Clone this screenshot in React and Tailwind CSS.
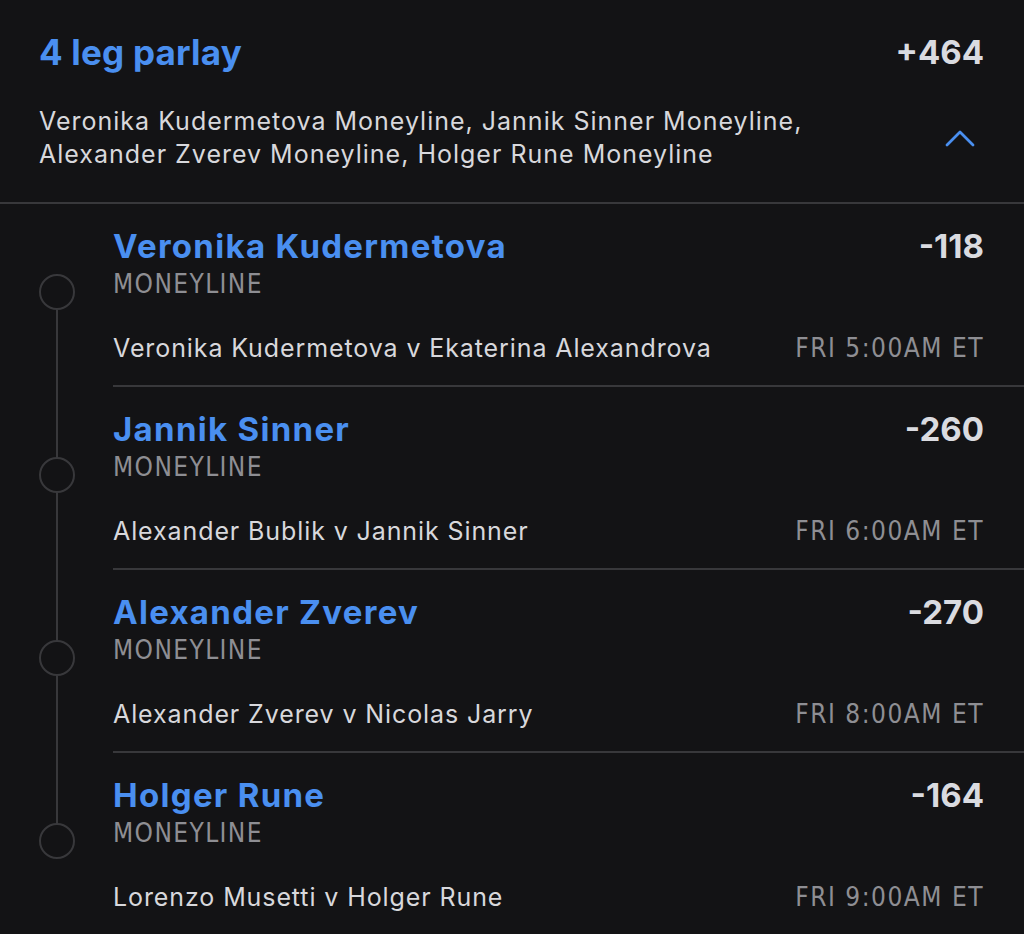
import React from "react";

const legs = [
  {
    name: "Veronika Kudermetova",
    odds: "-118",
    match: "Veronika Kudermetova v Ekaterina Alexandrova",
    time: "FRI 5:00AM ET",
  },
  {
    name: "Jannik Sinner",
    odds: "-260",
    match: "Alexander Bublik v Jannik Sinner",
    time: "FRI 6:00AM ET",
  },
  {
    name: "Alexander Zverev",
    odds: "-270",
    match: "Alexander Zverev v Nicolas Jarry",
    time: "FRI 8:00AM ET",
  },
  {
    name: "Holger Rune",
    odds: "-164",
    match: "Lorenzo Musetti v Holger Rune",
    time: "FRI 9:00AM ET",
  },
];

const sans = "font-['Inter',sans-serif]";
const narrow =
  "font-['Liberation_Sans_Narrow','DejaVu_Sans_Condensed','Roboto',sans-serif]";

function Leg({ leg, first, last }) {
  return (
    <div className="flex">
      {/* timeline */}
      <div className="w-[113px] shrink-0 flex flex-col items-center">
        <div className={`h-[70px] w-[2px] ${first ? "" : "bg-[#38383b]"}`}></div>
        <div className="h-[36px] w-[36px] rounded-full border-2 border-[#38383b]"></div>
        <div className={`flex-1 w-[2px] ${last ? "" : "bg-[#38383b]"}`}></div>
      </div>

      <div className={`flex-1 pr-[40px] pt-[23px] pb-[22px] ${last ? "" : "border-b-2 border-[#38383b]"}`}>
        <div className="flex items-center justify-between">
          <div className={`${sans} text-[33px] leading-[38px] font-bold tracking-[1.3px] text-[#4a8ff0]`}>
            {leg.name}
          </div>
          <div className={`${sans} text-[33px] leading-[38px] font-bold text-[#dadbe0]`}>
            {leg.odds}
          </div>
        </div>
        <div className={`${narrow} mt-[5px] text-[26px] leading-[28px] tracking-[1.4px] text-[#8e8e93]`}>
          MONEYLINE
        </div>
        <div className="mt-[35px] flex items-center justify-between">
          <div className={`${sans} text-[25px] leading-[30px] tracking-[0.9px] text-[#d8d8dc]`}>{leg.match}</div>
          <div className={`${narrow} text-[26px] leading-[30px] tracking-[1.5px] text-[#8e8e93]`}>
            {leg.time}
          </div>
        </div>
      </div>
    </div>
  );
}

export default function App() {
  return (
    <div className="min-h-[934px] w-full bg-[#131315]">
      <div className="pl-[39px] pr-[40px] pt-[31px] pb-[31px] border-b-2 border-[#38383b]">
        <div className="flex items-center justify-between">
          <div className={`${sans} text-[35px] leading-[42px] font-bold tracking-[0.2px] text-[#4a8ff0]`}>4 leg parlay</div>
          <div className={`${sans} text-[33px] leading-[42px] font-bold text-[#dadbe0]`}>+464</div>
        </div>
        <div className="mt-[32px] flex items-center justify-between">
          <div className={`${sans} text-[25px] leading-[33px] tracking-[1px] text-[#d8d8dc]`}>
            <div>Veronika Kudermetova Moneyline, Jannik Sinner Moneyline,</div>
            <div>Alexander Zverev Moneyline, Holger Rune Moneyline</div>
          </div>
          <svg width="30" height="18" viewBox="0 0 30 18" className="mr-[9px]">
            <path d="M2 16 L15 3 L28 16" fill="none" stroke="#4a8ff0" strokeWidth="2.8" strokeLinecap="round" strokeLinejoin="round" />
          </svg>
        </div>
      </div>

      {legs.map((leg, i) => (
        <Leg key={leg.name} leg={leg} first={i === 0} last={i === legs.length - 1} />
      ))}
    </div>
  );
}
